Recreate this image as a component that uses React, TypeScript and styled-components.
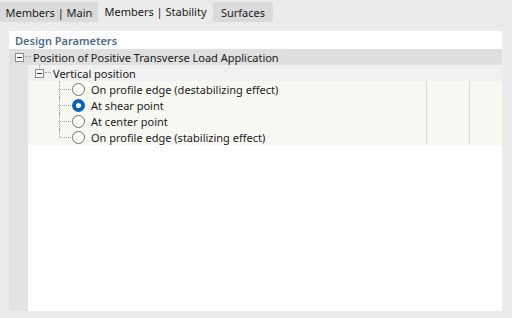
import * as React from 'react';
import styled, { createGlobalStyle } from 'styled-components';

const colors = {
  page: '#ebebeb',
  tab: '#dadada',
  strip: '#e3e3e3',
  groupRow: '#dfdfdf',
  subRow: '#f0f0f0',
  itemRow: '#f8f8f3',
  divider: '#dcdcdc',
  text: '#1a1a1a',
  header: '#4f6a8c',
  treeLine: '#a0a0a0',
  radioBlue: '#0b64b8',
};

const GlobalStyle = createGlobalStyle`
  html, body {
    margin: 0;
    padding: 0;
    background: ${colors.page};
  }
  body {
    font-family: "Noto Sans", "Open Sans", sans-serif;
    font-size: 11px;
    color: ${colors.text};
  }
`;

const Page = styled.div`
  width: 512px;
  height: 318px;
  display: flex;
  flex-direction: column;
  background: ${colors.page};
`;

const TabBar = styled.div`
  display: flex;
  height: 22px;
  align-items: flex-end;
`;

const Tab = styled.div<{ $active?: boolean; $width: number }>`
  width: ${({ $width }) => $width}px;
  height: ${({ $active }) => ($active ? 22 : 20)}px;
  display: flex;
  align-items: center;
  justify-content: center;
  background: ${({ $active }) => ($active ? colors.page : colors.tab)};
  font-size: 11px;
  padding-bottom: ${({ $active }) => ($active ? 0 : 0)}px;
  white-space: nowrap;
`;

const Content = styled.div`
  flex: 1;
  padding: 9px 10px 7px 9px;
  display: flex;
`;

const Panel = styled.div`
  flex: 1;
  display: flex;
  flex-direction: column;
  background: #fff;
`;

const Header = styled.div`
  height: 18px;
  display: flex;
  align-items: center;
  padding-left: 6px;
  font-weight: 600;
  color: ${colors.header};
`;

const GroupRow = styled.div`
  height: 16px;
  display: flex;
  align-items: center;
  background: ${colors.groupRow};
  padding-left: 6px;
`;

const Body = styled.div`
  flex: 1;
  display: flex;
`;

const Strip = styled.div`
  width: 19px;
  background: ${colors.strip};
`;

const Tree = styled.div`
  flex: 1;
  display: flex;
  flex-direction: column;
`;

const SubRow = styled.div`
  height: 16px;
  display: flex;
  align-items: center;
  background: ${colors.subRow};
  padding-left: 7px;
`;

const ItemRow = styled.div`
  height: 16px;
  display: flex;
  background: ${colors.itemRow};
`;

const LabelCell = styled.div`
  flex: 1;
  display: flex;
  align-items: center;
  padding-left: 31px;
`;

const ValueCell = styled.div<{ $width: number }>`
  width: ${({ $width }) => $width}px;
  border-left: 1px solid ${colors.divider};
`;

const Node = styled.span<{ $linked?: boolean }>`
  position: relative;
  display: flex;
  &::before {
    content: '';
    display: ${({ $linked }) => ($linked ? 'block' : 'none')};
    position: absolute;
    left: 4px;
    top: -4px;
    height: 3px;
    border-left: 1px dotted ${colors.treeLine};
  }
`;

const Connector = styled.span`
  width: 6px;
  height: 1px;
  margin: 0 2px 0 1px;
  border-top: 1px dotted ${colors.treeLine};
`;

const Branch = styled.div<{ $last?: boolean }>`
  position: relative;
  width: 13px;
  align-self: stretch;
  &::before {
    content: '';
    position: absolute;
    left: 0;
    top: 0;
    height: ${({ $last }) => ($last ? '50%' : '100%')};
    border-left: 1px dotted ${colors.treeLine};
  }
  &::after {
    content: '';
    position: absolute;
    left: 1px;
    right: 1px;
    top: 50%;
    border-top: 1px dotted ${colors.treeLine};
  }
`;

const Label = styled.span`
  margin-left: 6px;
  white-space: nowrap;
`;

const Spacer = styled.div`
  flex: 1;
`;

const ExpandBox = () => (
  <svg width="9" height="9" viewBox="0 0 9 9">
    <rect x="0.5" y="0.5" width="8" height="8" fill="#fff" stroke="#8c8c8c" />
    <line x1="2" y1="4.5" x2="7" y2="4.5" stroke="#333" />
  </svg>
);

const Radio = ({ checked }: { checked?: boolean }) =>
  checked ? (
    <svg width="13" height="13" viewBox="0 0 13 13">
      <circle cx="6.5" cy="6.5" r="6.5" fill={colors.radioBlue} />
      <circle cx="6.5" cy="6.5" r="2.6" fill="#fff" />
    </svg>
  ) : (
    <svg width="13" height="13" viewBox="0 0 13 13">
      <circle cx="6.5" cy="6.5" r="6" fill="#fbfbfb" stroke="#6e6e6e" />
    </svg>
  );

const options = [
  { label: 'On profile edge (destabilizing effect)', checked: false },
  { label: 'At shear point', checked: true },
  { label: 'At center point', checked: false },
  { label: 'On profile edge (stabilizing effect)', checked: false },
];

export default function App() {
  return (
    <Page>
      <GlobalStyle />
      <TabBar>
        <Tab $width={98}>Members | Main</Tab>
        <Tab $width={115} $active>Members | Stability</Tab>
        <Tab $width={60}>Surfaces</Tab>
      </TabBar>
      <Content>
        <Panel>
          <Header>Design Parameters</Header>
          <GroupRow>
            <Node>
              <ExpandBox />
            </Node>
            <Connector />
            <span>Position of Positive Transverse Load Application</span>
          </GroupRow>
          <Body>
            <Strip />
            <Tree>
              <SubRow>
                <Node $linked>
                  <ExpandBox />
                </Node>
                <Connector />
                <span>Vertical position</span>
              </SubRow>
              {options.map((o, i) => (
                <ItemRow key={o.label}>
                  <LabelCell>
                    <Branch $last={i === options.length - 1} />
                    <Radio checked={o.checked} />
                    <Label>{o.label}</Label>
                  </LabelCell>
                  <ValueCell $width={42} />
                  <ValueCell $width={32} />
                </ItemRow>
              ))}
              <Spacer />
            </Tree>
          </Body>
        </Panel>
      </Content>
    </Page>
  );
}
